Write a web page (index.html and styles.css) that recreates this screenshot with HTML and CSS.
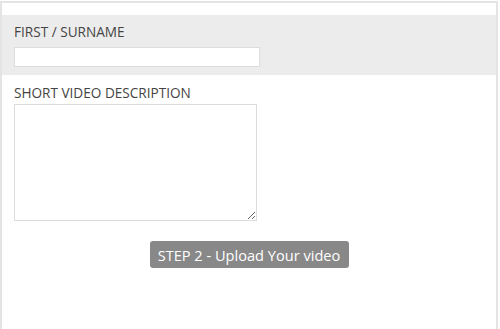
FILE: index.html
```html
<!DOCTYPE html>
<html>
<head>
    <title>Video upload</title>
    <meta charset="utf-8">
    <link rel="stylesheet" href="styles.css">
</head>
<body>
<div class="panel">
    <div class="field field-shaded">
        <label for="name">FIRST / SURNAME</label>
        <input type="text" id="name" name="name">
    </div>
    <div class="field">
        <label for="description">SHORT VIDEO DESCRIPTION</label>
        <textarea id="description" name="description"></textarea>
    </div>
    <div class="actions">
        <button type="button">STEP 2 - Upload Your video</button>
    </div>
</div>
</body>
</html>
```

FILE: styles.css
```css
/* Body styling */
body {
    font-family: 'Open Sans', 'DejaVu Sans', sans-serif;
    margin: 0;
    background-color: white;
}

/* Outer panel */
.panel {
    margin: 1px 2px 0 0;
    border: 2px solid #e4e4e4;
    border-bottom: none;
    padding-top: 12px;
    height: 340px;
    box-sizing: border-box;
}

/* Form fields */
.field {
    padding: 10px 12px 0;
}

.field-shaded {
    background-color: #ececec;
    padding-top: 9px;
    padding-bottom: 8px;
}

label {
    display: block;
    color: #444;
    font-size: 13.6px;
    line-height: 16px;
    margin-bottom: 3px;
}

.field-shaded label {
    margin-bottom: 7px;
}

input[type=text] {
    display: block;
    width: 246px;
    height: 20px;
    margin: 0;
    box-sizing: border-box;
    border: 1px solid #dcdcdc;
    background: white;
}

textarea {
    display: block;
    width: 243px;
    height: 117px;
    margin: 0;
    box-sizing: border-box;
    border: 1px solid #dcdcdc;
    resize: both;
}

/* Upload button */
.actions {
    text-align: center;
    padding-top: 20px;
}

button {
    background-color: #888;
    color: white;
    font-family: 'Open Sans', 'DejaVu Sans', sans-serif;
    font-size: 14.6px;
    padding: 0;
    height: 27px;
    width: 199px;
    border: none;
    border-radius: 3px;
}
```
